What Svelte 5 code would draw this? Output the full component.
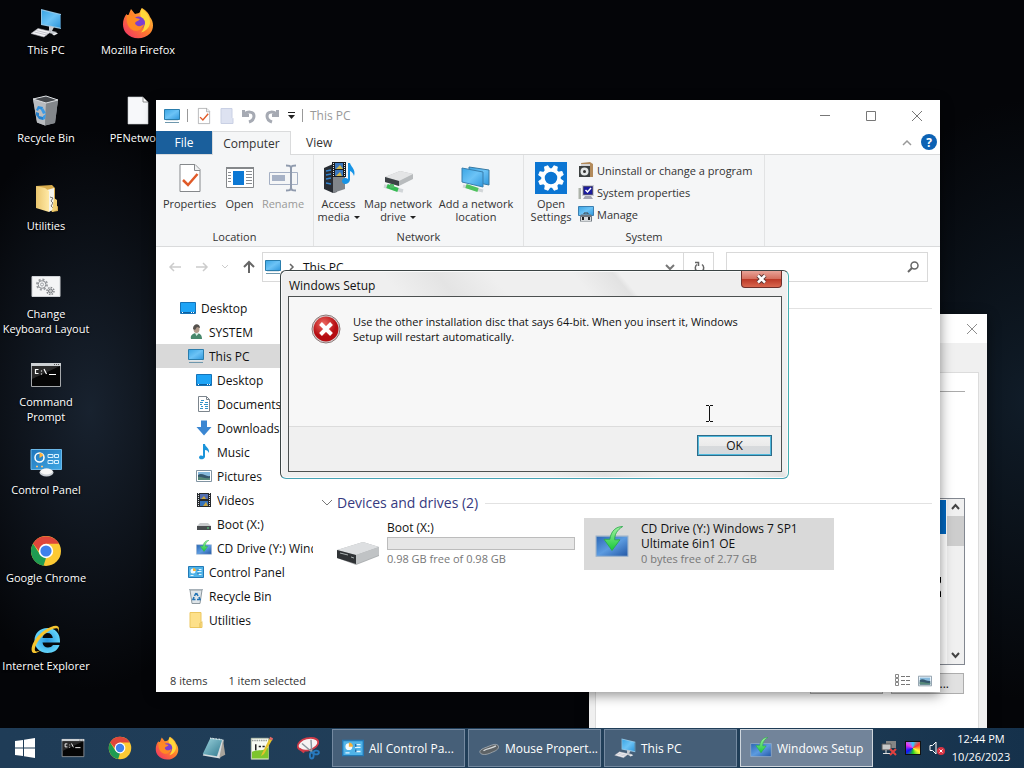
<script>
  const shortcuts = [
    { icon: 'pc', label: 'This PC' },
    { icon: 'bin', label: 'Recycle Bin' },
    { icon: 'folder', label: 'Utilities' },
    { icon: 'gears', label: 'Change\nKeyboard Layout' },
    { icon: 'cmd', label: 'Command\nPrompt' },
    { icon: 'control', label: 'Control Panel' },
    { icon: 'chrome', label: 'Google Chrome' },
    { icon: 'ie', label: 'Internet Explorer' },
    { icon: 'firefox', label: 'Mozilla Firefox' },
    { icon: 'file', label: 'PENetwork' },
  ];

  const tree = [
    { icon: 'desk', label: 'Desktop', level: 0 },
    { icon: 'user', label: 'SYSTEM', level: 1 },
    { icon: 'monitor', label: 'This PC', level: 1, selected: true },
    { icon: 'desk', label: 'Desktop', level: 2 },
    { icon: 'doc', label: 'Documents', level: 2 },
    { icon: 'down', label: 'Downloads', level: 2 },
    { icon: 'music', label: 'Music', level: 2 },
    { icon: 'picture', label: 'Pictures', level: 2 },
    { icon: 'film', label: 'Videos', level: 2 },
    { icon: 'drive16', label: 'Boot (X:)', level: 2 },
    { icon: 'setup', label: 'CD Drive (Y:) Windows 7 SP1', level: 2 },
    { icon: 'cpl16', label: 'Control Panel', level: 1 },
    { icon: 'bin16', label: 'Recycle Bin', level: 1 },
    { icon: 'folder16', label: 'Utilities', level: 1 },
  ];

  const pinned = [
    { icon: 'cmd', label: 'Command Prompt' },
    { icon: 'chrome', label: 'Google Chrome' },
    { icon: 'firefox', label: 'Mozilla Firefox' },
    { icon: 'notebook', label: 'Notepad' },
    { icon: 'npp', label: 'Notepad++' },
    { icon: 'snip', label: 'Snipping Tool' },
  ];

  const tasks = [
    { icon: 'cpl16', label: 'All Control Pa...' },
    { icon: 'mouse', label: 'Mouse Propert...' },
    { icon: 'pc', label: 'This PC' },
    { icon: 'setup', label: 'Windows Setup', active: true },
  ];

  const tools = [
    { icon: 'uninstall', label: 'Uninstall or change a program' },
    { icon: 'sysprops', label: 'System properties' },
    { icon: 'manage', label: 'Manage' },
  ];

  let search = $state('');
</script>

{#snippet icon(name, size)}
  {#if name === 'pc'}
    <svg width={size} height={size} viewBox="0 0 32 32" aria-hidden="true">
      <path d="M11 2 31 7v15l-20-4z" fill="#8fc4e4" />
      <path d="M12 3.500 30 8v12.500l-18-3.500z" fill="url(#screen)" />
      <path d="m30 8 1 0v13.500l-1-1z" fill="#3b6f92" />
      <path d="m19 19 5 1-2 4 5 1-4 2-8-2 4-1.500z" fill="#c9ced4" />
      <path d="m8 21.500 13 3-7 5.500-13-3.500z" fill="#f2f2f4" stroke="#a9a9b2" stroke-width=".6" />
      <path d="m6.500 23.500 12 3m-14-1.500 12 3" stroke="#b7b7c2" stroke-width=".8" />
      <path d="m22 27 4-1.500 2 1-4 2z" fill="#eceef0" />
    </svg>
  {:else if name === 'bin'}
    <svg width={size} height={size} viewBox="0 0 32 32" aria-hidden="true">
      <path d="m3 4 13-3 12 4-3 23-10 2.500-8-3z" fill="#9a9da1" />
      <path d="m3 4 13 4-1 22.500-8-3z" fill="#b9bcc0" />
      <path d="m16 8 12-3-3 23-10 2.500z" fill="#83878b" />
      <path d="m3 4 13-3 12 4-12 3z" fill="#45484c" stroke="#dcdfe2" />
      <path d="m8 11 5 1-1 3-3-1-1 2-2-1z" fill="#2e8fdd" />
      <path d="m13 13 3 5-3 1-2-4z" fill="#3b9be6" />
      <path d="m6 17 3 1 0 3 4 1v3l-4-1-3-4z" fill="#2580cc" />
      <path d="m16 19-1 5-2 1 0-4z" fill="#3b9be6" />
    </svg>
  {:else if name === 'folder'}
    <svg width={size} height={size} viewBox="0 0 32 32" aria-hidden="true">
      <path d="M6 3 22 2l3 3v19l3-1v5l-6 1z" fill="#d9ac4c" />
      <path d="m17 7 7-2v21l-5 3z" fill="#f5f5ee" />
      <path d="m20 14 3 1-2 3 2 2-2 3 2 2" stroke="#777" fill="none" />
      <path d="m6 3 9 2 4 3v21L6 25z" fill="url(#yellow)" />
      <path d="m24 15 3 2v10l-5 2z" fill="#f0cf73" />
    </svg>
  {:else if name === 'gears'}
    <svg width={size} height={size} viewBox="0 0 32 32" aria-hidden="true">
      <path d="M2 5.500h28v20H2z" fill="#f4f5f6" stroke="#cfd2d6" />
      <circle cx="12" cy="13.500" r="5" fill="none" stroke="#999ca0" stroke-width="2" stroke-dasharray="2 1.900" />
      <circle cx="12" cy="13.500" r="3.800" fill="none" stroke="#8d9095" />
      <circle cx="12" cy="13.500" r="1.500" fill="none" stroke="#a0a3a8" />
      <circle cx="20.500" cy="20" r="3.500" fill="none" stroke="#85888c" stroke-width="1.500" stroke-dasharray="1.600 1.100" />
      <circle cx="20.500" cy="20" r="2" fill="#c4c6c8" stroke="#7a7d81" />
    </svg>
  {:else if name === 'cmd'}
    <svg width={size} height={size} viewBox="0 0 32 32" aria-hidden="true">
      <path d="M1.500 4.500h29v23h-29z" fill="#050505" stroke="#a5a8ab" />
      <path d="M1 4h30v3H1z" fill="#cdd1d4" />
      <path d="M24 5.500h1m1 0h1m1 0h1" stroke="#555" />
      <path d="M2 7h28L2 20z" fill="#3a3a3a" opacity=".7" />
      <path d="M8.500 10.500H5.500v4h3M11.500 11.500v1m0 2v1M14 10l2.500 5M19 15.500h7" stroke="#fff" fill="none" stroke-width="1.200" />
    </svg>
  {:else if name === 'control'}
    <svg width={size} height={size} viewBox="0 0 32 32" aria-hidden="true">
      <path d="M1 2.500h30.500v20H1z" fill="url(#panel)" stroke="#6bb7e8" />
      <circle cx="9.500" cy="10.500" r="4.500" fill="none" stroke="#fff" stroke-width="1.500" />
      <path d="M9.500 11V5.500a5 5 0 0 1 4 3z" fill="#ffb33e" />
      <path d="M18 7.500h5v3h-5zm6.500 0h4v3h-4zM18 13.500h5v3h-5zm6.500 0h4v3h-4z" fill="none" stroke="#d7f0ff" />
      <path d="M6 19.500h2m3 0h2" stroke="#ffc47a" stroke-width="1.500" />
      <ellipse cx="16.500" cy="25.500" rx="7" ry="4" fill="#c9ced4" />
      <ellipse cx="16.500" cy="24.500" rx="6" ry="3" fill="#f6f6f6" />
    </svg>
  {:else if name === 'chrome'}
    <svg width={size} height={size} viewBox="0 0 32 32" aria-hidden="true">
      <circle cx="16" cy="16" r="15" fill="#fcc934" />
      <path d="M3 8.500 9.900 19.500 16 23l-2.500 7.800A15 15 0 0 1 3 8.500z" fill="#1f9b52" />
      <path d="M3 8.500A15 15 0 0 1 29 8.800H16l-6.500 8z" fill="#df463b" />
      <circle cx="16" cy="16" r="7.200" fill="#fff" />
      <circle cx="16" cy="16" r="5.600" fill="#3f81ec" />
    </svg>
  {:else if name === 'ie'}
    <svg width={size} height={size} viewBox="0 0 32 32" aria-hidden="true">
      <path d="M30 19.500H12.500c.5 3.500 2.500 5 5.500 5 2 0 4-.8 5-2.500h6.500C28 27 23.500 30 17.500 30 10 30 4.500 25 4.500 17.500S10 5 17.500 5C25 5 30.500 10 30 19.500zM12.500 15h10.300c-.3-3-2.300-5-5.200-5s-4.800 2-5.100 5z" fill="url(#ieblue)" fill-rule="evenodd" />
      <path d="M28 10c1.500-4 1.500-7-2-7.200C20 3 10 9 5 17 1.500 22 .5 28 3 29.800c2 1 5-.5 8-2.800-3 1.600-5.500 2-6 .5C4 24.500 7.500 18 13 12.500 18.500 7.500 25 4 27.500 5.500c1 .7 1 2.500.5 4.500z" fill="#f6c52f" />
    </svg>
  {:else if name === 'firefox'}
    <svg width={size} height={size} viewBox="0 0 32 32" aria-hidden="true">
      <path d="M20 1c5 3 7 6 8 9 4 5 4 12 0 16.500C22 33 10 33 4 26-1 20 1 11 4.500 7L6 9l3-7 4 5c3-.5 4-1 5-2 .5-2 1-3 2-4z" fill="url(#fire)" />
      <path d="M19.500 1.500c5 4 9 8 8.500 15-1 5-5 8-9 9 4-4 4-8 2-12-2-3-4-6-1.500-12z" fill="#ffd83a" />
      <circle cx="16.500" cy="16" r="6.500" fill="#7c3fd1" />
      <path d="M5 8c4 0 7 .5 9 3l4 1c-1 2-4 2-5 4 1 4 6 4 9 1-1 6-8 9-13 5-4-3-5-9-4-14z" fill="#ff8a24" />
    </svg>
  {:else if name === 'file'}
    <svg width={size} height={size} viewBox="0 0 32 32" aria-hidden="true">
      <path d="M6 2h15l5 5v22H6z" fill="#f7f8fa" stroke="#c9ccd0" stroke-width=".6" />
      <path d="M21 2v5h5z" fill="#fff" stroke="#777" stroke-width=".8" />
    </svg>
  {:else if name === 'desk'}
    <svg width={size} height={size} viewBox="0 0 16 16" aria-hidden="true">
      <path d="M.5 2.500h15v11H.5z" fill="#1ea4f6" stroke="#1573b8" />
      <path d="M1 12.500h14" stroke="#0d5f9f" /><path d="M2 12.500h1m8 0h1m1 0h1" stroke="#fff" />
    </svg>
  {:else if name === 'monitor'}
    <svg width={size} height={size} viewBox="0 0 16 16" aria-hidden="true">
      <path d="M.5 1.500h15v10H.5z" fill="url(#screen)" stroke="#2a7dac" />
      <path d="M2 12.500h12" stroke="#dce7ed" /><path d="M1 14.500h14" stroke="#6e97ad" />
    </svg>
  {:else if name === 'user'}
    <svg width={size} height={size} viewBox="0 0 16 16" aria-hidden="true">
      <path d="M3 15c-1-4 2-5 4-6h3c3 1 4 3 4 6z" fill="#47886c" />
      <path d="m7 9 1.500 3L11 9z" fill="#dbeee4" />
      <ellipse cx="8.500" cy="5" rx="3" ry="4" fill="#b09a8a" />
      <path d="M5 5c0-6 7-6 7-1L9 3 7 6z" fill="#55514d" />
    </svg>
  {:else if name === 'doc'}
    <svg width={size} height={size} viewBox="0 0 16 16" aria-hidden="true">
      <path d="M2.500.5h8l3 3v12h-11z" fill="#fff" stroke="#7c858d" /><path d="M10.500.5v3h3" fill="none" stroke="#7c858d" />
      <path d="M5 4.500h3M4 6.500h3m2 0h3m-8 2h2m2 0h4m-7 2h2m2 0h3m-8 2h3m2 0h3" stroke="#2f93c9" />
    </svg>
  {:else if name === 'down'}
    <svg width={size} height={size} viewBox="0 0 16 16" aria-hidden="true"><path d="M5 .5h6V7h4.500L8 15.500.5 7H5z" fill="#3a86d2" /></svg>
  {:else if name === 'music'}
    <svg width={size} height={size} viewBox="0 0 16 16" aria-hidden="true">
      <path d="M7 0h2c0 3 5 4 4 9-1-2-2-3-4-3v7c-1 3-6 3-6 .5C3 11 6 11 7 12z" fill="#1b94da" />
    </svg>
  {:else if name === 'picture'}
    <svg width={size} height={size} viewBox="0 0 16 16" aria-hidden="true">
      <path d="M.5 2.500h15v11H.5z" fill="#fff" stroke="#8194a2" />
      <path d="M2 4h12v8H2z" fill="#86b9dc" /><path d="M2 7c4-3 8 2 12 1v4H2z" fill="#35576d" /><path d="M2 9c3-1 6 2 12 1v2H2z" fill="#568879" />
    </svg>
  {:else if name === 'film'}
    <svg width={size} height={size} viewBox="0 0 16 16" aria-hidden="true">
      <path d="M1 1h14v14H1z" fill="#25282c" />
      <path d="M2.500 1v14m11-14v14" stroke="#dce0e4" stroke-dasharray="1 1" />
      <path d="M4 2h8v5H4z" fill="#526eb0" /><path d="M4 9h8v5H4z" fill="#3773ba" />
      <path d="m5 7 3-3 2 3zm2 7 3-4 2 4z" fill="#c9a63f" />
    </svg>
  {:else if name === 'drive16'}
    <svg width={size} height={size} viewBox="0 0 16 16" aria-hidden="true">
      <path d="M4 7h8l3 3H1z" fill="#c9cbcd" /><path d="M1 10h14v4H1z" fill="#494c4f" /><path d="M11 12h2" stroke="#59de80" />
    </svg>
  {:else if name === 'setup'}
    <svg width={size} height={size} viewBox="0 0 32 32" aria-hidden="true">
      <path d="M1 9.500h30v19H1z" fill="url(#setupblue)" stroke="#9cb2ca" />
      <path d="M26 .5c-6 0-11 4-12 12H8.500L16 23l7.500-10h-5c0-5 2-9 7.500-12.500z" fill="url(#green)" stroke="#2aa84a" stroke-width=".8" />
    </svg>
  {:else if name === 'cpl16'}
    <svg width={size} height={size} viewBox="0 0 16 16" aria-hidden="true">
      <path d="M.5 2.500h15v11H.5z" fill="#4fb3e8" stroke="#2379b5" />
      <circle cx="5" cy="7" r="2.500" fill="#f3fbff" /><path d="M5 7V4a3 3 0 0 1 3 3z" fill="#f7b23a" />
      <path d="M9.500 5.500h4m-4 2h4m-4 3h4m-11 1h3" stroke="#e4f6ff" /><path d="M10 5v2m0 2v2" stroke="#1d68a5" />
    </svg>
  {:else if name === 'bin16'}
    <svg width={size} height={size} viewBox="0 0 16 16" aria-hidden="true">
      <path d="M2 2h12l-2 13.500H4z" fill="#dfe5e9" stroke="#8d989f" /><path d="M1 1.500h14" stroke="#a7b1b8" />
      <path d="M8 5 6.500 8m2-3L10 8m1 1 1 2.500H9M7.500 11.500H5L6 9" stroke="#2474b5" stroke-width="1.600" fill="none" />
    </svg>
  {:else if name === 'folder16'}
    <svg width={size} height={size} viewBox="0 0 16 16" aria-hidden="true">
      <path d="M2 .5h11v9l1 1v5H2z" fill="#fde08a" stroke="#ecc761" /><path d="m12 15.500 0-4 2-2" fill="none" stroke="#dfb94e" />
    </svg>
  {:else if name === 'notebook'}
    <svg width={size} height={size} viewBox="0 0 32 32" aria-hidden="true">
      <path d="m12 3 17 2-5 25L1 26z" fill="#d7dde0" /><path d="m11 3 16 2-7 22-19-3z" fill="url(#teal)" />
      <path d="m28 5 3 20-8 4z" fill="#a8a39b" /><path d="m11 3 16 2" stroke="#eef6f8" stroke-width="2" stroke-dasharray="1 1" />
    </svg>
  {:else if name === 'npp'}
    <svg width={size} height={size} viewBox="0 0 32 32" aria-hidden="true">
      <path d="M3 3h23v28H3z" fill="#f7faf1" stroke="#b9c3a9" /><path d="M4 21c8-4 13 1 22-6v15H4z" fill="#7dc52d" />
      <path d="M4 6h21" stroke="#9aa19a" stroke-width="2" stroke-dasharray="2 1" /><path d="M9 11v8m4-5h3m2 0h3" stroke="#222" stroke-width="2" />
      <path d="m17 24 10-20 4 1-11 19-4 3z" fill="#e4c22c" /><path d="m27 4 1-3 4 2-1 3z" fill="#e66a67" />
    </svg>
  {:else if name === 'snip'}
    <svg width={size} height={size} viewBox="0 0 32 32" aria-hidden="true">
      <ellipse cx="16" cy="11" rx="14" ry="8" transform="rotate(-15 16 11)" fill="#f6f3f3" stroke="#d03b48" stroke-width="2.500" />
      <path d="m5 17 6 5" stroke="#d03b48" stroke-width="3" />
      <path d="m8 10 14 12M20 5l1 17" stroke="#8d979f" stroke-width="2" />
      <ellipse cx="21" cy="26" rx="2.500" ry="4" fill="none" stroke="#2879bd" stroke-width="2.500" /><ellipse cx="27" cy="22" rx="3.500" ry="2.500" fill="none" stroke="#2879bd" stroke-width="2.500" />
    </svg>
  {:else if name === 'mouse'}
    <svg width={size} height={size} viewBox="0 0 32 32" aria-hidden="true">
      <path d="M4 24c-4-4 2-7 8-9 7-3 13-6 17-3 3 4-2 8-8 10-6 3-13 5-17 2z" fill="#5d6265" stroke="#b6bcc0" /><path d="M8 20c5-4 12-3 18-7" stroke="#d6dadc" stroke-width="2" fill="none" />
    </svg>
  {:else if name === 'check'}
    <svg width={size} height={size} viewBox="0 0 32 32" aria-hidden="true">
      <path d="M6 2.500h15l5 5V29.500H6z" fill="#fff" stroke="#85888b" /><path d="M20.500 2.500v6H26" fill="#f0f1f2" stroke="#85888b" />
      <path d="m9 18 5 5 9.500-11" stroke="#e05a28" stroke-width="2.500" fill="none" />
    </svg>
  {:else if name === 'open'}
    <svg width={size} height={size} viewBox="0 0 32 32" aria-hidden="true">
      <path d="M2.500 5.500h27v20h-27z" fill="#fff" stroke="#85888b" /><path d="M2 6h28" stroke="#85888b" stroke-width="2" />
      <path d="M9 9h11v14H9z" fill="#0c78d4" />
      <path d="M4 10.500h3m-3 3h3m-3 3h3m-3 3h3m15-10h6m-6 3h6m-6 3h6m-6 3h6m-6 3h6" stroke="#898c91" />
    </svg>
  {:else if name === 'rename'}
    <svg width={size} height={size} viewBox="0 0 32 32" aria-hidden="true">
      <path d="M2.500 10.500h28v12h-28z" fill="none" stroke="#a5b0c4" /><path d="M5 13h13v6H5z" fill="#a7b2c6" />
      <path d="M19 3.500c3 0 5 0 5 3v19c0 3-2 3-5 3m10-25c-3 0-5 0-5 3v19c0 3 2 3 5 3" fill="none" stroke="#8f9aad" stroke-width="2" />
    </svg>
  {:else if name === 'media'}
    <svg width={size} height={size} viewBox="0 0 32 32" aria-hidden="true">
      <path d="m1 6 9-4 4 2v26l-4 1-9-4z" fill="#282d34" /><path d="m10 14 12-1v14l-12 4z" fill="#81868b" />
      <path d="m3 9 5-1m-5 5 5-1m-5 5 5-1m-5 5 5 1" stroke="#3585cf" stroke-width="1.500" />
      <path d="M9 0h14v15H9z" fill="#191c20" /><path d="M10.500 1v14m11-14v14" stroke="#e8e8e8" stroke-dasharray="1 1" /><path d="M12 1h8v6h-8zm0 7h8v6h-8z" fill="#3b77bd" /><path d="m13 7 4-4 3 4zm0 7 4-4 2 4z" fill="#d3b84b" />
      <path d="M25 1h2c1 4 6 6 4 13-1-3-2-4-4-5v9c-1 5-8 5-8 1 0-3 4-4 6-2z" fill="#1794e6" />
    </svg>
  {:else if name === 'netdrive'}
    <svg width={size} height={size} viewBox="0 0 32 32" aria-hidden="true">
      <path d="M3 15 18 9l13 3v5l-14 7-14-4z" fill="#b8bbbd" /><path d="m3 15 15-6 13 3-14 7z" fill="#e4e5e6" /><path d="m3 15 14 4v5L3 20z" fill="#3d4246" />
      <path d="m2 24 19 5" stroke="#d1d5d8" stroke-width="3.500" /><path d="m5 24 11 4" stroke="#35bb52" stroke-width="4" /><path d="M10 22v4" stroke="#53b868" stroke-width="4" />
    </svg>
  {:else if name === 'netloc'}
    <svg width={size} height={size} viewBox="0 0 32 32" aria-hidden="true">
      <path d="m9 5 20 3v15L9 19z" fill="url(#screen)" stroke="#3779a3" /><path d="m2 6 21 4v15L2 20z" fill="url(#screen)" stroke="#387fae" />
      <path d="m3 24 20 5" stroke="#d1d5d8" stroke-width="3" /><path d="m6 24 12 4" stroke="#4fc25d" stroke-width="4" />
    </svg>
  {:else if name === 'settings'}
    <svg width={size} height={size} viewBox="0 0 32 32" aria-hidden="true">
      <path d="M0 0h32v32H0z" fill="#0c76d3" />
      {#each [0, 45, 90, 135, 180, 225, 270, 315] as turn}
        <path d="m13.500 7 .8-3.500h3.400l.8 3.500z" transform="rotate({turn + 22} 16 16)" fill="#fff" stroke="#fff" />
      {/each}
      <circle cx="16" cy="16" r="8" fill="none" stroke="#fff" stroke-width="3.500" />
    </svg>
  {:else if name === 'uninstall'}
    <svg width={size} height={size} viewBox="0 0 16 16" aria-hidden="true">
      <path d="m3 1 9-1 3 2v13H5z" fill="#b38b5c" /><path d="M1 4h11v11H1z" fill="#3c4040" /><circle cx="6.500" cy="9.500" r="4" fill="#e4e7e7" /><circle cx="6.500" cy="9.500" r="1.500" fill="#333" /><path d="M3 2h9v2H3z" fill="#d5d5d5" />
    </svg>
  {:else if name === 'sysprops'}
    <svg width={size} height={size} viewBox="0 0 16 16" aria-hidden="true">
      <path d="M4 1h12v11H4z" fill="#cccdd6" /><path d="M5.500 2.500h9v8h-9z" fill="#1b1b9e" stroke="#4b4b78" /><path d="m7.500 6 2 2L13 4" stroke="#fff" fill="none" stroke-width="1.500" /><path d="M.5 4v11H3V4z" fill="#aeb4ab" /><path d="M7 12h6l2 3H5z" fill="#a4a5b3" />
    </svg>
  {:else if name === 'manage'}
    <svg width={size} height={size} viewBox="0 0 16 16" aria-hidden="true">
      <path d="M.5.500h15v9H.5z" fill="url(#screen)" stroke="#3a7eb0" /><path d="M3 8.500h10l1 2v5H2v-5z" fill="#6f777f" /><path d="M3 11h10v4H3z" fill="#d8dbdd" /><path d="M5 11v3m6-3v3" stroke="#222" stroke-width="2" /><path d="M6 8V7h4v1" fill="none" stroke="#444" />
    </svg>
  {/if}
{/snippet}

<svg class="defs" width="0" height="0" aria-hidden="true">
  <defs>
    <linearGradient id="screen" x1="0" y1="0" x2="1" y2="1"><stop offset="0" stop-color="#3aa5e4" /><stop offset=".5" stop-color="#6cc3f6" /><stop offset="1" stop-color="#2f97dc" /></linearGradient>
    <linearGradient id="yellow" x1="0" x2="1"><stop stop-color="#eac66e" /><stop offset="1" stop-color="#ffe9a5" /></linearGradient>
    <linearGradient id="panel" x1="0" y1="0" x2="1" y2="1"><stop stop-color="#1e74ba" /><stop offset="1" stop-color="#40a8e4" /></linearGradient>
    <radialGradient id="ieblue"><stop stop-color="#2896df" /><stop offset="1" stop-color="#62d4fb" /></radialGradient>
    <linearGradient id="fire" x1="1" y1="0" x2="0" y2="1"><stop stop-color="#ffd33a" /><stop offset=".5" stop-color="#ff7a2c" /><stop offset="1" stop-color="#f02a70" /></linearGradient>
    <linearGradient id="setupblue" x1="0" y1="0" x2="1" y2="1"><stop stop-color="#2a66b4" /><stop offset=".5" stop-color="#5c9be0" /><stop offset="1" stop-color="#2357a5" /></linearGradient>
    <linearGradient id="green" x1="0" y1="0" x2="0" y2="1"><stop stop-color="#a0f3a0" /><stop offset="1" stop-color="#17c83a" /></linearGradient>
    <linearGradient id="teal" x1="0" y1="0" x2="1" y2="1"><stop stop-color="#9fd5df" /><stop offset="1" stop-color="#31798f" /></linearGradient>
    <radialGradient id="red" cx=".4" cy=".3"><stop stop-color="#ee6a62" /><stop offset="1" stop-color="#b50d12" /></radialGradient>
  </defs>
</svg>

<div class="screen">
  <main class="desktop">
    <nav class="shortcuts" aria-label="Desktop">
      {#each shortcuts as s}
        <button class="shortcut">{@render icon(s.icon, 32)}<span>{s.label}</span></button>
      {/each}
    </nav>

    <section class="window mouse-props" aria-label="Mouse Properties">
      <header><button class="plain" aria-label="Close"><svg width="12" height="12" viewBox="0 0 12 12"><path d="m1 1 10 10M11 1 1 11" stroke="#8d8d8d" fill="none" /></svg></button></header>
      <div class="sheet">
        <hr />
        <div class="cursor-list">
          <div class="cursor-rows">
            <div class="picked"></div>
            <svg class="busy" width="12" height="20" viewBox="0 0 12 20" aria-hidden="true"><path d="M1 1h10M1 19h10M2 1v4l4 5-4 5v4m8-18v4l-4 5 4 5v4" stroke="#000" stroke-width="2" fill="none" /></svg>
          </div>
          <div class="scrollbar">
            <svg width="17" height="17" viewBox="0 0 17 17"><path d="m5 10 3.500-4 3.500 4" stroke="#444" stroke-width="2" fill="none" /></svg>
            <div class="thumb"></div>
            <svg width="17" height="17" viewBox="0 0 17 17"><path d="m5 6 3.500 4L12 6" stroke="#444" stroke-width="2" fill="none" /></svg>
          </div>
        </div>
        <div class="sheet-buttons"><button aria-label="Use Default"></button><button aria-label="Browse">...</button></div>
      </div>
    </section>

    <section class="window explorer" aria-label="This PC">
      <header class="titlebar">
        {@render icon('monitor', 16)}
        <i class="sep"></i>
        <button class="plain" aria-label="Properties">{@render icon('check', 18)}</button>
        <button class="plain" aria-label="New folder"><svg width="14" height="16" viewBox="0 0 14 16"><path d="M1 .5h11v9l1 1v5H1z" fill="#dde2f1" stroke="#c9d0e4" /></svg></button>
        <button class="plain" aria-label="Undo"><svg width="16" height="16" viewBox="0 0 16 16"><path d="M2.500 2v5.500H8M3 7c3-4 10-4 10 1 0 3-2 5-5 6" stroke="#a6aab3" stroke-width="3" fill="none" /></svg></button>
        <button class="plain" aria-label="Redo"><svg width="16" height="16" viewBox="0 0 16 16"><path d="M13.500 2v5.500H8M13 7C10 3 3 3 3 8c0 3 2 5 5 6" stroke="#a6aab3" stroke-width="3" fill="none" /></svg></button>
        <div class="more">
          <button class="plain" aria-label="Customize"><svg width="9" height="8" viewBox="0 0 9 8"><path d="M1 .5h7" stroke="#222" /><path d="M1 3h7L4.500 7z" fill="#222" /></svg></button>
          <i class="sep"></i>
        </div>
        <h1>This PC</h1>
        <div class="captions">
          <button class="plain" aria-label="Minimize"><svg width="12" height="12" viewBox="0 0 12 12"><path d="M1 5.500h10" stroke="#777" /></svg></button>
          <button class="plain" aria-label="Maximize"><svg width="12" height="12" viewBox="0 0 12 12"><path d="M1.500 1.500h9v9h-9z" stroke="#777" fill="none" /></svg></button>
          <button class="plain" aria-label="Close"><svg width="12" height="12" viewBox="0 0 12 12"><path d="m1 1 10 10M11 1 1 11" stroke="#777" fill="none" /></svg></button>
        </div>
      </header>

      <div class="tabs">
        <button class="file">File</button>
        <button class="current">Computer</button>
        <button>View</button>
        <button class="plain fold" aria-label="Collapse ribbon"><svg width="10" height="8" viewBox="0 0 10 8"><path d="m1 6 4-4 4 4" stroke="#999" stroke-width="1.500" fill="none" /></svg></button>
        <button class="plain help" aria-label="Help">?</button>
      </div>

      <div class="ribbon">
        <div class="group location">
          <div class="commands">
            <button class="big w60">{@render icon('check', 32)}<span>Properties</span></button>
            <button class="big w40">{@render icon('open', 32)}<span>Open</span></button>
            <button class="big w48 dim">{@render icon('rename', 32)}<span>Rename</span></button>
          </div>
          <div class="caption">Location</div>
        </div>
        <div class="group network">
          <div class="commands">
            <button class="big w40">{@render icon('media', 32)}<span>Access<br />media<i class="drop"></i></span></button>
            <button class="big w76">{@render icon('netdrive', 32)}<span>Map network<br />drive<i class="drop"></i></span></button>
            <button class="big w76">{@render icon('netloc', 32)}<span>Add a network<br />location</span></button>
          </div>
          <div class="caption">Network</div>
        </div>
        <div class="group system">
          <div class="commands">
            <button class="big w48">{@render icon('settings', 32)}<span>Open<br />Settings</span></button>
            <div class="tools">
              {#each tools as t}<button class="tool">{@render icon(t.icon, 16)}{t.label}</button>{/each}
            </div>
          </div>
          <div class="caption">System</div>
        </div>
      </div>

      <div class="navbar">
        <div class="arrows">
          <button class="plain" aria-label="Back"><svg width="14" height="12" viewBox="0 0 14 12"><path d="M13 6H2m4-4L2 6l4 4" stroke="#ccc" stroke-width="1.500" fill="none" /></svg></button>
          <button class="plain" aria-label="Forward"><svg width="14" height="12" viewBox="0 0 14 12"><path d="M1 6h11M8 2l4 4-4 4" stroke="#ccc" stroke-width="1.500" fill="none" /></svg></button>
          <button class="plain" aria-label="Recent"><svg width="8" height="6" viewBox="0 0 8 6"><path d="m1 1 3 3 3-3" stroke="#ccc" fill="none" /></svg></button>
          <button class="plain" aria-label="Up"><svg width="14" height="14" viewBox="0 0 14 14"><path d="M7 13V2M2 7l5-5 5 5" stroke="#666" stroke-width="2" fill="none" /></svg></button>
        </div>
        <div class="address">
          {@render icon('monitor', 16)}
          <svg width="6" height="8" viewBox="0 0 6 8"><path d="m1 1 3 3-3 3" stroke="#666" stroke-width="1.500" fill="none" /></svg>
          <span>This PC</span>
          <button class="plain" aria-label="Previous locations"><svg width="10" height="7" viewBox="0 0 10 7"><path d="m1 1 4 4 4-4" stroke="#777" stroke-width="2" fill="none" /></svg></button>
          <button class="plain refresh" aria-label="Refresh"><svg width="12" height="12" viewBox="0 0 12 12"><path d="M9 3.500a4.200 4.200 0 1 1-5 0M2 1.500h3.500V5" stroke="#666" stroke-width="1.500" fill="none" /></svg></button>
        </div>
        <label class="search"><input type="text" bind:value={search} aria-label="Search This PC" /><svg width="12" height="12" viewBox="0 0 12 12"><circle cx="7.500" cy="4.500" r="3.500" stroke="#666" stroke-width="1.500" fill="none" /><path d="M5 7 1 11" stroke="#666" stroke-width="2" /></svg></label>
      </div>

      <div class="panes">
        <nav class="tree" aria-label="Folders">
          {#each tree as n}
            <button class="node level{n.level}" class:selected={n.selected}>{@render icon(n.icon, 16)}<span>{n.label}</span></button>
          {/each}
        </nav>
        <div class="content">
          <hr class="folders" />
          <h2><svg width="12" height="8" viewBox="0 0 12 8"><path d="m1 1 5 5 5-5" stroke="#777" fill="none" /></svg>Devices and drives (2)<i></i></h2>
          <div class="drives">
            <button class="drive">
              <svg class="disk" width="44" height="26" viewBox="0 0 44 26" aria-hidden="true">
                <path d="M1 9 27 1l16 5v9L20 24 1 17z" fill="#aeb1b3" /><path d="M1 9 27 1l16 5-23 8z" fill="#dddfe1" /><path d="m1 9 19 5v9L1 17z" fill="#303336" /><path d="m4 12 8 2m3 2 3 1" stroke="#a9b0b0" /><path d="m20 14 23-8v8l-23 9z" fill="#c0c3c5" />
              </svg>
              <span class="info"><span>Boot (X:)</span><span class="bar"></span><small>0.98 GB free of 0.98 GB</small></span>
            </button>
            <button class="drive selected">
              {@render icon('setup', 34)}
              <span class="info"><span>CD Drive (Y:) Windows 7 SP1 Ultimate 6in1 OE</span><small>0 bytes free of 2.77 GB</small></span>
            </button>
          </div>
        </div>
      </div>

      <footer class="status">
        <span>8 items</span><span>1 item selected</span>
        <div class="views">
          <button class="plain" aria-label="Details"><svg width="16" height="13" viewBox="0 0 16 13"><path d="M.5.500h3v3h-3zm0 4h3v3h-3zm0 4h3v3h-3z" fill="none" stroke="#888" /><path d="M6 2.500h4m1 0h4M6 6.500h4m1 0h4m-9 4h4m1 0h4" stroke="#777" /></svg></button>
          <button class="plain" aria-label="Large icons">{@render icon('picture', 14)}</button>
        </div>
      </footer>
    </section>

    <section class="dialog" role="alertdialog" aria-labelledby="setup-title" aria-describedby="setup-text">
      <header>
        <h1 id="setup-title">Windows Setup</h1>
        <button aria-label="Close"><svg width="13" height="10" viewBox="0 0 13 10"><path d="m3 1.500 7 7m0-7-7 7" stroke="#5a3a38" stroke-width="4.500" /><path d="m3 1.500 7 7m0-7-7 7" stroke="#fff" stroke-width="2.500" /></svg></button>
      </header>
      <div class="frame">
        <div class="message">
          <svg width="30" height="30" viewBox="0 0 30 30" aria-hidden="true">
            <circle cx="15" cy="15" r="14" fill="#d8d5d5" stroke="#8d7777" /><circle cx="15" cy="15" r="12.500" fill="url(#red)" /><path d="m9.500 9.500 11 11m0-11-11 11" stroke="#fff" stroke-width="4" />
          </svg>
          <p id="setup-text">Use the other installation disc that says 64-bit. When you insert it, Windows Setup will restart automatically.</p>
        </div>
        <footer><button>OK</button></footer>
      </div>
    </section>

    <svg class="pointer" width="9" height="17" viewBox="0 0 9 17" aria-hidden="true"><path d="M1 .5h3m1 0h3M4.500 1v15M1 16.500h3m1 0h3" stroke="#111" fill="none" /></svg>
  </main>

  <footer class="taskbar">
    <button class="start" aria-label="Start"><svg width="22" height="22" viewBox="0 0 22 22"><path d="m1 4 8-1v7.500H1zm9-1.200L21 1v9.500H10zM1 11.500h8V19l-8-1zm9 0h11V21l-11-1.800z" fill="#fff" /></svg></button>
    {#each pinned as p}<button class="pin" aria-label={p.label}>{@render icon(p.icon, 24)}</button>{/each}
    <div class="tasks">
      {#each tasks as t}<button class="task" class:active={t.active}>{@render icon(t.icon, 22)}<span>{t.label}</span></button>{/each}
    </div>
    <div class="tray">
      <svg width="16" height="16" viewBox="0 0 16 16" aria-hidden="true"><path d="M5 1h10v7H5z" fill="#858585" /><path d="M1 4h9v6H1z" fill="#c8c8c8" stroke="#555" /><path d="M5 10v3M2 13.500h7" stroke="#ddd" /><path d="m9 9 6 6m0-6-6 6" stroke="#e2413f" stroke-width="2" /></svg>
      <i class="colors"></i>
      <svg width="16" height="16" viewBox="0 0 16 16" aria-hidden="true"><path d="M1 5.500h2.500L7 2v12l-3.500-3.500H1z" fill="none" stroke="#fff" /><circle cx="12" cy="11" r="4" fill="#d73343" /><path d="m10.500 9.500 3 3m0-3-3 3" stroke="#fff" /></svg>
    </div>
    <time class="clock">12:44 PM<br />10/26/2023</time>
  </footer>
</div>

<style>
  :global(body) { margin: 0; font: 12px/15px "Open Sans", "Noto Sans", sans-serif; color: #111; background: #05070b; }
  button, input { font: inherit; color: inherit; margin: 0; padding: 0; border: 0; background: none; }
  h1, h2, p { margin: 0; font-size: inherit; font-weight: 400; }
  svg { flex: none; display: block; }
  .defs { position: absolute; }
  .plain { display: flex; align-items: center; justify-content: center; }
  .screen { height: 100vh; display: flex; flex-direction: column; overflow: hidden; }
  .desktop {
    position: relative; flex: 1; min-height: 0; overflow: hidden;
    background:
      radial-gradient(ellipse 150px 280px at 90px 410px, #18222f, transparent),
      radial-gradient(ellipse 180px 300px at 100% 400px, #101c28, transparent),
      #040508;
  }
  .shortcuts { height: 704px; display: grid; grid-auto-flow: column; grid-template-rows: repeat(8, 88px); grid-auto-columns: 92px; }
  .shortcut { display: flex; flex-direction: column; align-items: center; gap: 3px; padding-top: 7px; color: #fff; font-size: 11px; text-align: center; text-shadow: 0 1px 2px #000; white-space: pre; }

  .window { position: absolute; display: flex; flex-direction: column; background: #fff; box-shadow: 0 3px 12px rgb(0 0 0 / 45%); }
  .mouse-props { left: 589px; top: 314px; width: 398px; height: 440px; background: #f0f0f0; }
  .mouse-props header { height: 29px; background: #fff; display: flex; justify-content: flex-end; padding-right: 9px; }
  .sheet { flex: 1; margin: 29px 8px 0 6px; padding: 0 13px; background: #fff; border: 1px solid #dcdcdc; }
  .sheet hr { margin: 18px 0 106px; border: 0; border-top: 1px solid #aaa; }
  .cursor-list { height: 165px; display: flex; border: 1px solid #828790; }
  .cursor-rows { flex: 1; padding: 1px; }
  .picked { height: 34px; background: #0067c0; }
  .busy { margin: 43px 4px 0 auto; }
  .scrollbar { width: 17px; background: #f0f0f0; display: flex; flex-direction: column; }
  .thumb { height: 30px; margin-bottom: auto; background: #cdcdcd; }
  .sheet-buttons { display: flex; justify-content: flex-end; gap: 8px; margin: 8px 1px; }
  .sheet-buttons button { width: 73px; height: 21px; border: 1px solid #adadad; background: #e1e1e1; text-align: right; padding-right: 14px; }

  .explorer { left: 156px; top: 100px; width: 784px; height: 592px; }
  .titlebar { height: 31px; display: flex; align-items: center; gap: 7px; padding-left: 8px; }
  .titlebar h1 { color: #999; }
  .more { display: flex; align-items: center; gap: 6px; }
  .sep { width: 1px; height: 13px; background: #999; }
  .captions { margin-left: auto; display: flex; }
  .captions button { width: 46px; }
  .tabs { display: flex; height: 24px; border-bottom: 1px solid #dadbdc; box-sizing: border-box; color: #333; }
  .tabs button:not(.plain) { padding: 0 15px; }
  .tabs .file { width: 56px; background: #1a5f9c; color: #fff; }
  .tabs .current.current { width: 79px; padding: 0; margin-bottom: -1px; background: #f5f6f7; border: 1px solid #dadbdc; border-bottom: 0; }
  .tabs .fold { margin-left: auto; margin-right: 9px; }
  .tabs .help { width: 16px; height: 16px; margin: 3px 3px 0 0; border-radius: 50%; background: #0c62b4; color: #fff; font-weight: 700; }
  .ribbon { height: 92px; display: flex; background: #f5f6f7; border-bottom: 1px solid #dadbdc; box-sizing: border-box; color: #333; font-size: 11px; }
  .group { display: flex; flex-direction: column; justify-content: space-between; border-right: 1px solid #e2e3e4; padding: 4px 4px 2px; box-sizing: border-box; }
  .group.location { width: 158px; }
  .group.network { width: 210px; }
  .group.system { width: 241px; }
  .commands { display: flex; align-items: flex-start; }
  .big { display: flex; flex-direction: column; align-items: center; gap: 3px; padding-top: 3px; line-height: 13px; white-space: nowrap; }
  .w40 { width: 41px; }
  .w48 { width: 46px; }
  .w60 { width: 59px; }
  .w76 { width: 78px; }
  .dim { color: #999; }
  .drop { display: inline-block; border: 3px solid transparent; border-top-color: #222; border-bottom: 0; margin-left: 4px; vertical-align: 2px; }
  .tools { display: flex; flex-direction: column; padding-left: 4px; }
  .tool { height: 22px; display: flex; align-items: center; gap: 3px; white-space: nowrap; }
  .caption { text-align: center; }

  .navbar { display: flex; height: 30px; padding: 5px 12px 5px 0; }
  .arrows { width: 106px; display: flex; align-items: center; justify-content: space-between; padding: 0 6px 0 12px; box-sizing: border-box; }
  .address { flex: 1; display: flex; align-items: center; gap: 8px; border: 1px solid #d9d9d9; padding-left: 2px; margin-right: 12px; box-sizing: border-box; }
  .address span { flex: 1; }
  .refresh { width: 30px; align-self: stretch; border-left: 1px solid #d9d9d9; }
  .search { width: 202px; display: flex; align-items: center; border: 1px solid #d9d9d9; padding-right: 8px; box-sizing: border-box; }
  .search input { flex: 1; min-width: 0; padding: 0 8px; outline: 0; }

  .panes { flex: 1; min-height: 0; display: flex; }
  .tree { width: 157px; padding-top: 9px; overflow: hidden; box-sizing: border-box; }
  .node { width: 100%; height: 24px; display: flex; align-items: center; gap: 5px; white-space: nowrap; }
  .node span { flex: 1; overflow: hidden; text-align: left; }
  .level0 { padding-left: 24px; }
  .level1 { padding-left: 32px; }
  .level2 { padding-left: 40px; }
  .node.selected { background: #d9d9d9; }
  .content { flex: 1; padding: 0 8px; }
  .folders { margin: 21px 0 185px; border: 0; border-top: 1px solid #e2e2e2; }
  h2 { display: flex; align-items: center; gap: 4px; font-size: 14px; line-height: 18px; color: #363a80; }
  h2 i { flex: 1; height: 1px; background: #e2e2e2; margin-left: 3px; }
  .drives { display: flex; margin-top: 6px; padding-left: 8px; gap: 5px; }
  .drive { width: 250px; height: 52px; display: flex; align-items: flex-start; padding: 2px 4px 0 7px; gap: 7px; text-align: left; box-sizing: border-box; }
  .disk { margin-top: 21px; }
  .drive.selected { background: #d9d9d9; align-items: center; padding: 0 20px 2px 11px; gap: 12px; }
  .info { flex: 1; display: flex; flex-direction: column; }
  .bar { height: 11px; border: 1px solid #bcbcbc; background: #e6e6e6; margin: 2px 0 1px; }
  small { font-size: 11px; color: #777; }
  .status { height: 23px; display: flex; align-items: center; gap: 21px; padding: 0 8px 0 14px; color: #333; font-size: 11px; }
  .views { margin-left: auto; display: flex; gap: 7px; }

  .dialog {
    position: absolute; left: 280px; top: 270px; width: 509px; height: 209px; box-sizing: border-box; padding: 0 6px 6px 7px;
    display: flex; flex-direction: column; border: 1px solid #3b4444; border-right-color: #45aeb0; border-bottom-color: #45a3b5; border-radius: 6px;
    background: linear-gradient(50deg, transparent 40%, #e4e4e4 48%, transparent 56%, transparent 68%, #e2e2e2 74%, transparent 75%), #efefef;
    box-shadow: inset 0 0 0 1px #fafafa;
  }
  .dialog header { height: 25px; display: flex; justify-content: space-between; padding-left: 1px; }
  .dialog h1 { line-height: 29px; }
  .dialog header button { width: 41px; height: 17px; display: flex; align-items: center; justify-content: center; border: 1px solid #6e302b; border-top: 0; border-radius: 0 0 4px 4px; background: linear-gradient(#e8a398, #d5705f 48%, #bb3927 52%, #d9674f); }
  .frame { flex: 1; display: flex; flex-direction: column; border: 1px solid #4c5050; background: #f7f7f7; }
  .message { flex: 1; display: flex; gap: 12px; padding: 17px 20px 0 22px; font-size: 11px; }
  .frame footer { height: 45px; display: flex; align-items: flex-start; justify-content: flex-end; padding: 8px 9px 0 0; border-top: 1px solid #dcdcdc; background: #f0f0f0; box-sizing: border-box; }
  .frame footer button { width: 75px; height: 21px; border: 1px solid #2f6b88; box-shadow: inset 0 0 0 1px #4fb9dd; background: linear-gradient(#f2f2f2, #ebebeb 50%, #d8dadc 52%, #d5dade); }
  .pointer { position: absolute; left: 705px; top: 405px; }

  .taskbar { height: 40px; display: flex; align-items: stretch; background: linear-gradient(90deg, #1f3c57, #213f59 70%, #15314b); color: #fff; }
  .start { width: 49px; display: flex; align-items: center; justify-content: center; }
  .pin { width: 47px; display: flex; align-items: center; justify-content: center; }
  .tasks { flex: 1; display: flex; gap: 3px; padding: 1px 0 1px 1px; }
  .task { flex: 1; max-width: 133px; min-width: 0; display: flex; align-items: center; gap: 5px; padding: 0 9px; border: 1px solid #7489a0; background: #465f78; white-space: nowrap; box-sizing: border-box; }
  .task.active { background: #72849a; border-color: #cfd6dd; }
  .tray { display: flex; align-items: center; gap: 8px; padding-left: 8px; }
  .colors { width: 14px; height: 12px; border: 1px solid #111; background: conic-gradient(#2ad4ff, #f33, #ff3, #2c2, #11f, #e3e, #2ad4ff); }
  .clock { width: 72px; padding: 2px 0 0; font-size: 11px; line-height: 18px; text-align: center; margin: 0 7px 0 0; }
</style>
